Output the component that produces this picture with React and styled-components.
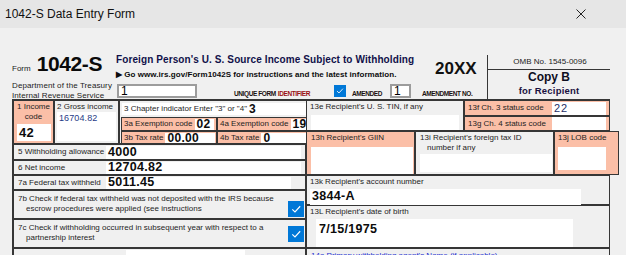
import React from "react";
import styled, { createGlobalStyle } from "styled-components";

const SALMON = "#fbbfa7";
const LINE = "#363636";
const PANEL = "#f0f0f0";

const GlobalStyle = createGlobalStyle`
  * { box-sizing: border-box; }
  html, body { margin: 0; padding: 0; background: ${PANEL}; overflow: hidden; }
  body { font-family: "Liberation Sans", Arial, sans-serif; color: #1c1c1c; }
`;

const Window = styled.div`
  width: 626px;
  height: 255px;
  overflow: hidden;
  display: flex;
  flex-direction: column;
  background: ${PANEL};
`;

const TitleBar = styled.div`
  flex: none;
  height: 28px;
  display: flex;
  align-items: center;
  justify-content: space-between;
  padding: 0 40px 0 5px;
  background: #e6e6e6;
  font-size: 12px;
  color: #111;
`;

const Body = styled.div`
  padding: 0 16px 0 12px;
  font-size: 8px;
  line-height: 9.5px;
`;

/* ---------- header ---------- */
const Header = styled.div`
  height: 71px;
  display: flex;
`;

const FormBlock = styled.div`
  width: 102px;
  padding-top: 26px;
`;

const FormTitleRow = styled.div`
  display: flex;
  align-items: baseline;
  gap: 6px;
  line-height: 20px;
`;

const FormWord = styled.span`
  font-size: 8px;
`;

const FormNumber = styled.span`
  font-size: 21px;
  font-weight: bold;
  letter-spacing: -0.4px;
  color: #0a0a0a;
`;

const Dept = styled.div`
  margin-top: 2px;
  font-size: 8px;
  line-height: 10px;
  letter-spacing: 0.1px;
  white-space: nowrap;
`;

const CenterBlock = styled.div`
  width: 373px;
  display: flex;
  flex-direction: column;
`;

const CenterTop = styled.div`
  display: flex;
  padding-top: 25px;
`;

const TitleBlock = styled.div`
  width: 316px;
  padding-left: 2px;
`;

const MainTitle = styled.div`
  font-size: 10px;
  font-weight: bold;
  line-height: 13px;
  letter-spacing: 0.1px;
  color: #10104a;
  white-space: nowrap;
`;

const GoLine = styled.div`
  margin-top: 4px;
  font-size: 8px;
  line-height: 9px;
  font-weight: bold;
  letter-spacing: 0.05px;
  white-space: nowrap;
  color: #0c0c0c;
`;

const Year = styled.div`
  flex: 1;
  padding: 6px 0 0 5px;
  font-size: 17px;
  line-height: 20px;
  font-weight: bold;
  color: #111;
`;

const IdRow = styled.div`
  display: flex;
  align-items: center;
  height: 14px;
  margin-top: 5px;
`;

const SmallInput = styled.div`
  width: ${(p) => p.$w}px;
  height: 14px;
  margin-left: ${(p) => p.$ml}px;
  background: #fff;
  border: 2px solid #9c9c9c;
  font-size: 12px;
  line-height: 10px;
  padding-left: 2px;
  color: #000;
`;

const Tag = styled.span`
  margin-left: ${(p) => p.$ml}px;
  margin-top: 5px;
  font-size: 6.5px;
  font-weight: bold;
  letter-spacing: -0.4px;
  white-space: nowrap;
  color: ${(p) => (p.$red ? "#9a1010" : "#1a1010")};
`;

const CopyBlock = styled.div`
  width: 123px;
  margin-top: 27px;
  height: 44px;
  border-left: 1.5px solid ${LINE};
`;

const Omb = styled.div`
  height: 15px;
  border-bottom: 1px solid ${LINE};
  font-size: 8px;
  text-align: center;
  line-height: 14px;
  padding-left: 2px;
`;

const CopyB = styled.div`
  text-align: center;
  font-size: 12px;
  font-weight: bold;
  line-height: 15px;
  color: #0e0e1e;
`;

const ForRecipient = styled.div`
  text-align: center;
  font-size: 9.5px;
  font-weight: bold;
  line-height: 11px;
  letter-spacing: 0.2px;
  color: #1a1040;
`;

/* ---------- grid ---------- */
const FormGrid = styled.div`
  display: grid;
  grid-template-columns: 293px 304px;
  align-items: start;
  border: 1px solid ${LINE};
  border-bottom: none;
`;

const Column = styled.div`
  display: flex;
  flex-direction: column;
`;

const StatusColumn = styled(Column)`
  flex: 1;
`;

const Box = styled.div`
  border: 1px solid ${LINE};
  height: ${(p) => (p.$h ? `${p.$h}px` : "auto")};
  width: ${(p) => (p.$w ? `${p.$w}px` : "auto")};
  flex: ${(p) => (p.$grow ? "1" : "none")};
  background: ${(p) => (p.$salmon ? SALMON : PANEL)};
  padding: ${(p) => p.$pad || "1px 3px"};
  display: flex;
  flex-direction: ${(p) => (p.$row ? "row" : "column")};
  align-items: ${(p) => (p.$row ? "center" : "stretch")};
`;

const BoxRow = styled.div`
  display: flex;
  height: ${(p) => p.$h}px;
  flex: none;
`;

const Label = styled.span`
  font-size: 8px;
  line-height: 9.5px;
  white-space: nowrap;
  color: #1e1e1e;
  width: ${(p) => (p.$w ? `${p.$w}px` : "auto")};
  flex: ${(p) => (p.$fill ? "1" : "none")};
  text-align: ${(p) => (p.$center ? "center" : "left")};
`;

const Indent = styled.span`
  padding-left: ${(p) => p.$pl || 8}px;
`;

const Field = styled.div`
  background: #fff;
  width: ${(p) => (p.$w ? `${p.$w}px` : "auto")};
  height: ${(p) => (p.$h ? `${p.$h}px` : "auto")};
  flex: ${(p) => (p.$grow ? "1" : "none")};
  margin: ${(p) => p.$m || "0"};
  display: flex;
  align-items: ${(p) => (p.$top ? "flex-start" : "center")};
  padding: ${(p) => p.$pad || "0 2px"};
`;

const Value = styled.span`
  font-size: ${(p) => p.$size || 12.5}px;
  font-weight: ${(p) => (p.$light ? "normal" : "bold")};
  letter-spacing: ${(p) => p.$ls ?? 0.3}px;
  color: ${(p) => p.$color || "#0c0c0c"};
  white-space: nowrap;
  line-height: 1;
`;

const ChapterField = styled.div`
  background: #fff;
  height: 12px;
  margin: 1px 0 2px 1px;
  display: flex;
  align-items: center;
  padding-left: 2px;
  gap: 2px;
`;

const SubCell = styled.div`
  border: 1px solid ${LINE};
  background: ${SALMON};
  width: ${(p) => (p.$w ? `${p.$w}px` : "auto")};
  flex: ${(p) => (p.$w ? "none" : "1")};
  display: flex;
  align-items: center;
  padding: 0 1px 0 2px;
  gap: 2px;
`;

const CheckBox = styled.div`
  width: ${(p) => p.$size}px;
  height: ${(p) => p.$size}px;
  background: #0078d7;
  margin-left: ${(p) => p.$ml || 0}px;
  display: flex;
  align-items: center;
  justify-content: center;
  flex: none;
`;

const CheckRow = styled(Box)`
  flex-direction: row;
  align-items: stretch;
  justify-content: space-between;
  padding: 2px 1px 0 4px;
`;

const CheckText = styled.div`
  padding-top: 1px;
`;

const CheckSlot = styled.div`
  display: flex;
  align-items: ${(p) => (p.$mid ? "center" : "flex-end")};
  padding-bottom: 1px;
`;

const BlueLabel = styled(Label)`
  color: #1c2fd0;
  padding-left: 4px;
`;

function Check({ size, ml }) {
  return (
    <CheckBox $size={size} $ml={ml}>
      <svg width={size * 0.65} height={size * 0.65} viewBox="0 0 12 12">
        <path d="M1.5 6.2 L4.6 9.2 L10.6 2.6" fill="none" stroke="#fff" strokeWidth="1.3" />
      </svg>
    </CheckBox>
  );
}

function LineRow({ h, label, labelWidth, value, fieldEnd }) {
  return (
    <Box $h={h} $row $pad="0 0 0 4px">
      <Label $w={labelWidth}>{label}</Label>
      <Field $grow $h={h - 3} $m={`0 ${fieldEnd}px 0 0`}>
        {value && <Value>{value}</Value>}
      </Field>
    </Box>
  );
}

export default function App() {
  return (
    <Window>
      <GlobalStyle />
      <TitleBar>
        <span>1042-S Data Entry Form</span>
        <svg width="10" height="10" viewBox="0 0 10 10">
          <path d="M0.5 0.5 L9.5 9.5 M9.5 0.5 L0.5 9.5" stroke="#222" strokeWidth="1" />
        </svg>
      </TitleBar>
      <Body>
        <Header>
          <FormBlock>
            <FormTitleRow>
              <FormWord>Form</FormWord>
              <FormNumber>1042-S</FormNumber>
            </FormTitleRow>
            <Dept>
              Department of the Treasury
              <br />
              Internal Revenue Service
            </Dept>
          </FormBlock>
          <CenterBlock>
            <CenterTop>
              <TitleBlock>
                <MainTitle>Foreign Person's U. S. Source Income Subject to Withholding</MainTitle>
                <GoLine>▶ Go www.irs.gov/Form1042S for instructions and the latest information.</GoLine>
              </TitleBlock>
              <Year>20XX</Year>
            </CenterTop>
            <IdRow>
              <SmallInput $w={80} $ml={3}>1</SmallInput>
              <Tag $ml={37}>UNIQUE FORM </Tag>
              <Tag $ml={2} $red>IDENTIFIER</Tag>
              <Check size={12} ml={24} />
              <Tag $ml={6}>AMENDED</Tag>
              <SmallInput $w={21} $ml={8}>1</SmallInput>
              <Tag $ml={11}>AMENDMENT NO.</Tag>
            </IdRow>
          </CenterBlock>
          <CopyBlock>
            <Omb>OMB No. 1545-0096</Omb>
            <CopyB>Copy B</CopyB>
            <ForRecipient>for Recipient</ForRecipient>
          </CopyBlock>
        </Header>

        <FormGrid>
          <Column>
            <BoxRow $h={44}>
              <Box $w={41} $salmon $pad="1px 2px 2px">
                <Label $center>
                  1 Income
                  <br />
                  code
                </Label>
                <Field $h={17} $m="3px 0 0 1px">
                  <Value $size={13}>42</Value>
                </Field>
              </Box>
              <Box $w={65} $pad="1px 2px 2px">
                <Label>2 Gross income</Label>
                <Field $grow $top $pad="2px 2px">
                  <Value $size={9} $light $ls={0.1} $color="#1f3b86">16704.82</Value>
                </Field>
              </Box>
              <Box $grow $pad="1px 1px 0">
                <ChapterField>
                  <Label>3 Chapter indicator Enter "3" or "4"</Label>
                  <Value $size={12}>3</Value>
                </ChapterField>
                <BoxRow $h={14}>
                  <SubCell $w={96}>
                    <Label>3a Exemption code</Label>
                    <Field $w={19} $h={11}>
                      <Value $size={12}>02</Value>
                    </Field>
                  </SubCell>
                  <SubCell>
                    <Label>4a Exemption code</Label>
                    <Field $grow $h={11}>
                      <Value $size={12}>19</Value>
                    </Field>
                  </SubCell>
                </BoxRow>
                <BoxRow $h={13}>
                  <SubCell $w={96}>
                    <Label>3b Tax rate</Label>
                    <Field $grow $h={10}>
                      <Value $size={12}>00.00</Value>
                    </Field>
                  </SubCell>
                  <SubCell>
                    <Label>4b Tax rate</Label>
                    <Field $grow $h={10}>
                      <Value $size={12}>0</Value>
                    </Field>
                  </SubCell>
                </BoxRow>
              </Box>
            </BoxRow>
            <LineRow h={16} label="5 Withholding allowance" labelWidth={88} value="4000" fieldEnd={4} />
            <LineRow h={15} label="6 Net income" labelWidth={88} value="12704.82" fieldEnd={4} />
            <LineRow h={15} label="7a Federal tax withheld" labelWidth={88} value="5011.45" fieldEnd={14} />
            <CheckRow $h={29}>
              <CheckText>
                <Label>
                  7b Check if federal tax withheld was not deposited with the IRS because
                  <br />
                  <Indent>escrow procedures were applied (see instructions</Indent>
                </Label>
              </CheckText>
              <CheckSlot>
                <Check size={16} />
              </CheckSlot>
            </CheckRow>
            <CheckRow $h={29}>
              <CheckText>
                <Label>
                  7c Check if withholding occurred in subsequent year with respect to a
                  <br />
                  <Indent>partnership interest</Indent>
                </Label>
              </CheckText>
              <CheckSlot $mid>
                <Check size={16} />
              </CheckSlot>
            </CheckRow>
            <LineRow h={20} label="8 Tax withheld by other agents" labelWidth={108} fieldEnd={60} />
          </Column>

          <Column>
            <BoxRow $h={31}>
              <Box $w={158} $pad="1px 4px 1px 3px">
                <Label>13e Recipient's U. S. TIN, if any</Label>
                <Field $h={15} $m="3px 0 0 1px" />
              </Box>
              <StatusColumn>
                <Box $h={16} $row $salmon $pad="0 3px 0 3px">
                  <Label $fill>13f Ch. 3 status code</Label>
                  <Field $w={54} $h={13}>
                    <Value $size={11} $light $ls={0.8} $color="#1f2f66">22</Value>
                  </Field>
                </Box>
                <Box $h={15} $row $salmon $pad="0 3px 0 3px">
                  <Label $fill>13g Ch. 4 status code</Label>
                  <Field $w={54} $h={13} />
                </Box>
              </StatusColumn>
            </BoxRow>
            <BoxRow $h={44}>
              <Box $w={109} $salmon $pad="1px 1px 0 4px">
                <Label>13h Recipient's GIIN</Label>
                <Field $grow $m="4px 0 0 0" />
              </Box>
              <Box $w={139} $pad="1px 1px 2px 4px">
                <Label>
                  13i Recipient's foreign tax ID
                  <br />
                  <Indent $pl={7}>number if any</Indent>
                </Label>
                <Field $grow $m="2px 0 0 0" />
              </Box>
              <Box $grow $salmon $pad="1px 12px 4px 3px">
                <Label>13j LOB code</Label>
                <Field $grow $m="4px 0 0 0" />
              </Box>
            </BoxRow>
            <Box $h={30} $pad="1px 28px 1px 3px">
              <Label>13k Recipient's account number</Label>
              <Field $h={16} $m="2px 0 0 0">
                <Value>3844-A</Value>
              </Field>
            </Box>
            <Box $h={43} $pad="1px 36px 0 3px">
              <Label>13L Recipient's date of birth</Label>
              <Field $grow $top $m="2px 0 0 6px" $pad="4px 3px 0">
                <Value>7/15/1975</Value>
              </Field>
            </Box>
            <Box $h={20} $pad="2px 0 0 0">
              <BlueLabel>14a Primary withholding agent's Name (if applicable)</BlueLabel>
            </Box>
          </Column>
        </FormGrid>
      </Body>
    </Window>
  );
}
